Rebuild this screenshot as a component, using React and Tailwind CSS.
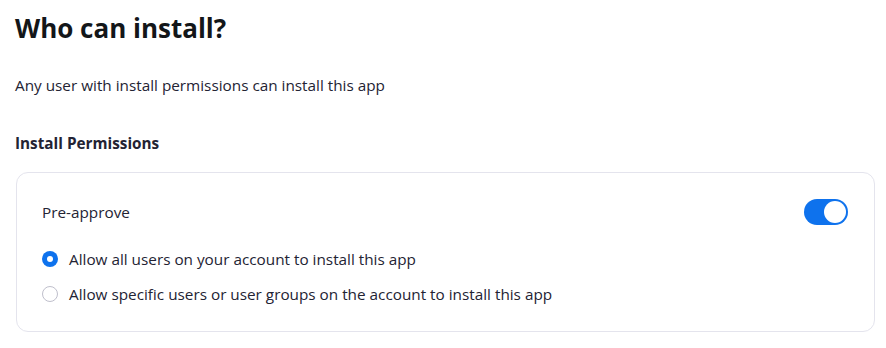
export default function App() {
  return (
    <div className="w-[886px] h-[348px] bg-white pl-[15px] pr-[11px] pt-[9px]" style={{ fontFamily: '"Open Sans", sans-serif' }}>
      <h1 className="text-[26px] leading-[38px] font-bold text-[#131619]">Who can install?</h1>
      <p className="mt-[28px] text-[15.3px] leading-[20px] text-[#232333]">Any user with install permissions can install this app</p>
      <h2 className="mt-[38px] text-[15.3px] leading-[20px] font-bold text-[#232333]">Install Permissions</h2>
      <div className="mt-[19px] ml-[1px] rounded-[12px] border border-[#e4e4ed] pl-[25px] pr-[26px] pt-[26px] pb-[27px]">
        <div className="flex items-center justify-between">
          <span className="text-[15.3px] leading-[20px] text-[#232333]">Pre-approve</span>
          <div className="w-[44px] h-[26px] rounded-full bg-[#0e72ed] flex items-center justify-end pr-[2px]">
            <div className="w-[22px] h-[22px] rounded-full bg-white"></div>
          </div>
        </div>
        <div className="mt-[24px] flex flex-col gap-[15px]">
          <label className="flex items-center gap-[11px]">
            <span className="w-[16px] h-[16px] rounded-full bg-[#0e72ed] flex items-center justify-center">
              <span className="w-[6px] h-[6px] rounded-full bg-white"></span>
            </span>
            <span className="text-[15.3px] leading-[20px] text-[#232333]">Allow all users on your account to install this app</span>
          </label>
          <label className="flex items-center gap-[11px]">
            <span className="w-[16px] h-[16px] rounded-full border border-[#bfbfcc] bg-white"></span>
            <span className="text-[15.3px] leading-[20px] text-[#232333]">Allow specific users or user groups on the account to install this app</span>
          </label>
        </div>
      </div>
    </div>
  );
}
